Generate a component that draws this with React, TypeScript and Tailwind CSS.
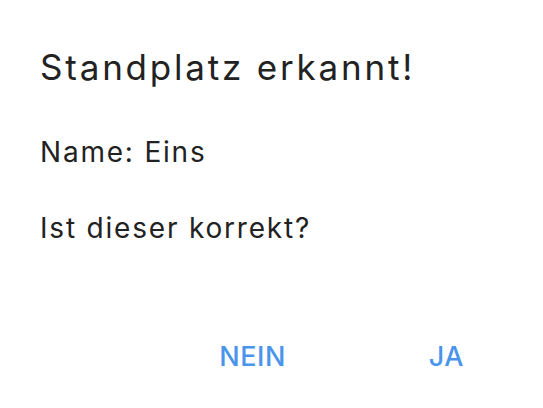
export default function App() {
  return (
    <div className="w-[543px] h-[408px] bg-white flex flex-col" style={{ fontFamily: 'Inter, sans-serif' }}>
      <div className="px-10 pt-[46px]">
        <h1 className="text-[35px] leading-[42px] tracking-[2.8px] text-[#222222]">Standplatz erkannt!</h1>
        <p className="mt-[47px] text-[28px] leading-[34px] tracking-[1.8px] text-[#222222]">Name: Eins</p>
        <p className="mt-[42px] text-[28px] leading-[34px] tracking-[1.8px] text-[#222222]">Ist dieser korrekt?</p>
      </div>
      <div className="mt-[95px] flex justify-end pr-[79px] gap-[143px]">
        <button className="text-[27px] leading-[33px] font-medium tracking-[0.5px] text-[#4a94ec]">NEIN</button>
        <button className="text-[27px] leading-[33px] font-medium tracking-[0.5px] text-[#4a94ec]">JA</button>
      </div>
    </div>
  );
}
